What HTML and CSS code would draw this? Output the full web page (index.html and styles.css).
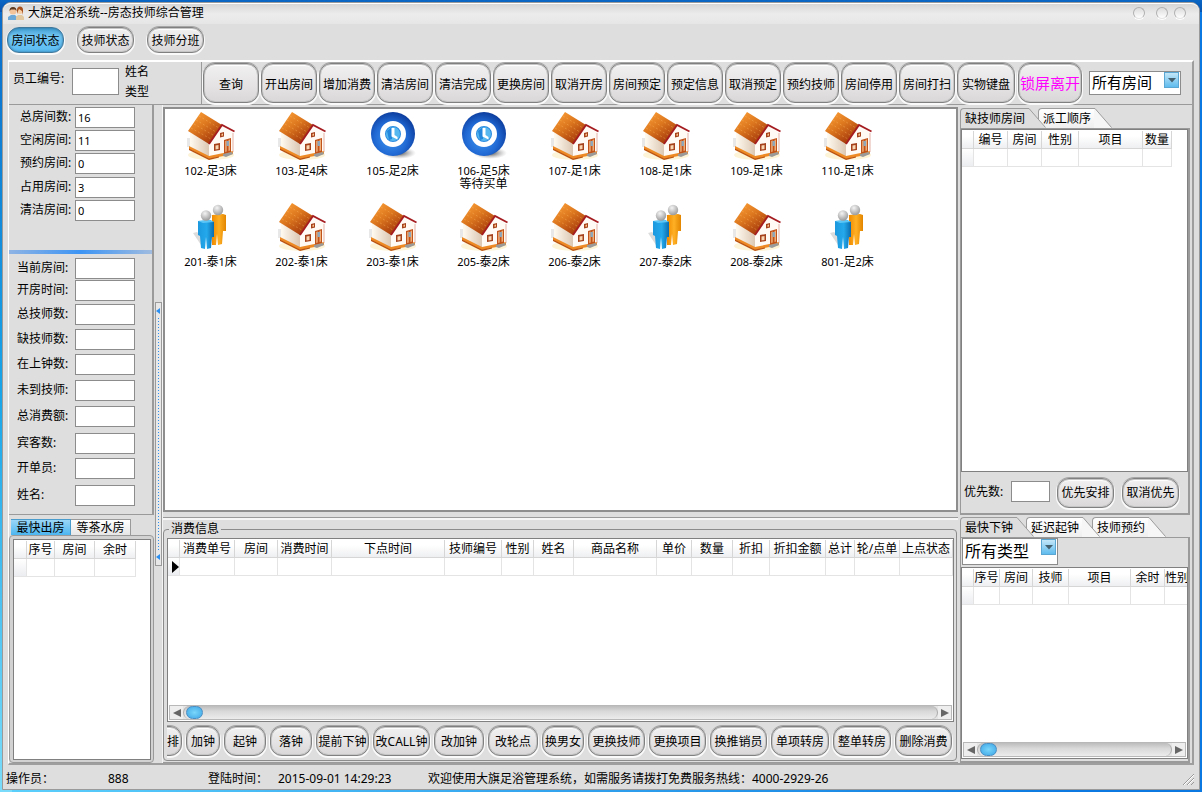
FILE: index.html
```html
<!DOCTYPE html>
<html lang="zh-CN">
<head>
<meta charset="utf-8">
<title>大旗足浴系统--房态技师综合管理</title>
<link rel="stylesheet" href="styles.css">
</head>
<body>
<svg class="defs" aria-hidden="true">
  <defs>
    <linearGradient id="roof" x1="0" y1="0" x2="0.7" y2="1"><stop offset="0" stop-color="#ffa53a"/><stop offset=".5" stop-color="#dc761e"/><stop offset="1" stop-color="#a0340a"/></linearGradient>
    <linearGradient id="wall" x1="0" y1="0" x2="1" y2="0"><stop offset="0" stop-color="#fffaf0"/><stop offset="1" stop-color="#dac5b0"/></linearGradient>
    <radialGradient id="ball" cx=".45" cy=".6" r=".62"><stop offset="0" stop-color="#3f97f2"/><stop offset=".6" stop-color="#2069d4"/><stop offset="1" stop-color="#0b3a9a"/></radialGradient>
    <radialGradient id="head" cx=".4" cy=".3" r=".7"><stop offset="0" stop-color="#f4f4f4"/><stop offset="1" stop-color="#9c9c9c"/></radialGradient>
    <linearGradient id="blue" x1="0" y1="0" x2="1" y2="0"><stop offset="0" stop-color="#1c98de"/><stop offset=".55" stop-color="#24a9ec"/><stop offset="1" stop-color="#0b6cae"/></linearGradient>
    <linearGradient id="orange" x1="0" y1="0" x2="1" y2="0"><stop offset="0" stop-color="#f08a00"/><stop offset=".5" stop-color="#ffb024"/><stop offset="1" stop-color="#e28500"/></linearGradient>
    <radialGradient id="shade"><stop offset="0" stop-color="#444"/><stop offset="1" stop-color="#999" stop-opacity="0"/></radialGradient>
    <symbol id="house" viewBox="0 0 48 48">
      <ellipse cx="24" cy="43" rx="23" ry="5" fill="#fdf3d6"/>
      <path d="M0 26h4v9H0z" fill="#e8e8e8"/>
      <path d="M3 20l20 11v15L3 36z" fill="url(#wall)"/>
      <path d="M22 31L35 14l11 6v21l-24 6z" fill="#fffaf3"/>
      <path d="M2 34l20 10 24-5v3l-24 5L2 37z" fill="#ee8a24"/>
      <path d="M2 36.500l20 10 10-2v1l-10 2.500L2 38z" fill="#b9510f"/>
      <path d="M14 0l21 13-13 19L1 19z" fill="url(#roof)"/>
      <path d="M12 4l20 12M9 8l20 12M7 12l19 11M4 16l20 11" stroke="#ffc26a" stroke-opacity=".45" stroke-width=".8" stroke-dasharray="2 2" fill="none"/>
      <path d="M22 32L35 13l12.500 6.500" fill="none" stroke="#a51c20" stroke-width="1.800"/>
      <path d="M46 21v19" stroke="#e0a090" stroke-width=".8"/>
      <path d="M33 21l4-1v4.500l-4 1z" fill="#a5421c"/><path d="M34.500 22l1.500-.5v2l-1.500.5z" fill="#ffc890"/>
      <path d="M27 32l6-1v7l-6 1z" fill="#a5421c"/><path d="M28.500 33.500l3-.5v4l-3 .5z" fill="#f9d5b0"/>
      <path d="M37 28l7-2v14l-7 2z" fill="#c0521b"/><path d="M38.200 29l1.500-.5v11l-1.500.5zM41.500 28l1.500-.5v11l-1.500.5z" fill="#f0b07a"/><path d="M39.500 29h2.500v5h-2.500z" fill="#8fa7b8"/>
      <path d="M36 42l9-2 1 2-7 3-3-1z" fill="#9a9a9a"/>
    </symbol>
    <symbol id="clock" viewBox="0 0 48 48">
      <ellipse cx="30" cy="41" rx="17" ry="6" fill="url(#shade)"/>
      <circle cx="24" cy="22" r="22" fill="url(#ball)"/>
      <circle cx="24" cy="22" r="10.500" fill="#2a8ae0" stroke="#fff" stroke-width="5"/>
      <circle cx="24" cy="22" r="7" fill="#57b8ef"/>
      <path d="M18 19l5-4v12l-3 1z" fill="#2287dd"/>
      <path d="M22.500 16h3v7l3 2v2.500l-6-3z" fill="#fff"/>
    </symbol>
    <symbol id="people" viewBox="0 0 48 48">
      <path d="M14 42L6 30l4-1 6 6z" fill="#dcdcdc"/>
      <path d="M25 12l11-1 3 1v16h-3l-1 13-4 1-1-11-1 11h-4z" fill="url(#orange)"/>
      <circle cx="31" cy="7" r="5.200" fill="url(#head)"/>
      <path d="M11 18l12-1 4 2v15h-2l-1 11-4 1-1-12-1 12-4-1-1-12-2-1z" fill="url(#blue)"/>
      <path d="M11 18l12-1 4 2-11 1z" fill="#5cc6f6"/>
      <circle cx="19" cy="12.500" r="5.200" fill="url(#head)"/>
    </symbol>
    <symbol id="slant" viewBox="0 0 18 20">
      <path class="slant-face" d="M0 .5h1L17 19v1H0z"/><path d="M0 .5h1L17.500 19.500" fill="none" stroke="#9c9c9c"/>
    </symbol>
  </defs>
</svg>

<div class="window">
  <header class="titlebar">
    <svg class="app-icon" viewBox="0 0 16 14"><path d="M0 14V11l3-2h4l2 2v3z" fill="#6da9d8"/><path d="M8 14v-3l2-2h4l2 2v3z" fill="#e3c9a0"/><circle cx="5" cy="5" r="3.500" fill="#f3c39a"/><path d="M1.500 5a3.500 4 0 0 1 7 0L7 3.500H3z" fill="#5a3a20"/><circle cx="12" cy="5" r="3" fill="#f6cfa5"/><path d="M9 8V4a3 3.500 0 0 1 6 0v5l-1-4-3-2-1 2z" fill="#a5501c"/></svg>
    <h1>大旗足浴系统--房态技师综合管理</h1>
    <div class="win-controls"><button class="dot dot-first" aria-label="最小化"></button><button class="dot" aria-label="最大化"></button><button class="dot" aria-label="关闭"></button></div>
  </header>

  <nav class="views">
    <button class="btn active">房间状态</button><button class="btn">技师状态</button><button class="btn">技师分班</button>
  </nav>

  <main class="frame">
    <div class="toolbar">
      <div class="employee">
        <label for="emp">员工编号:</label><input id="emp" type="text">
        <div class="employee-info"><span>姓名</span><span>类型</span></div>
      </div>
      <div class="actions">
        <button class="btn">查询</button><button class="btn">开出房间</button><button class="btn">增加消费</button><button class="btn">清洁房间</button><button class="btn">清洁完成</button><button class="btn">更换房间</button><button class="btn">取消开房</button><button class="btn">房间预定</button><button class="btn">预定信息</button><button class="btn">取消预定</button><button class="btn">预约技师</button><button class="btn">房间停用</button><button class="btn">房间打扫</button><button class="btn keyboard">实物键盘</button><button class="btn lock">锁屏离开</button>
      </div>
      <div class="combo room-filter">
        <select aria-label="房间筛选"><option>所有房间</option></select>
        <span class="combo-arrow"><svg viewBox="0 0 8 5"><path d="M0 0h8L4 4.500z"/></svg></span>
      </div>
    </div>

    <div class="body">
      <aside class="left">
        <section class="info">
          <div class="fields totals">
            <label for="f1">总房间数:</label><input id="f1" type="text" value="16">
            <label for="f2">空闲房间:</label><input id="f2" type="text" value="11">
            <label for="f3">预约房间:</label><input id="f3" type="text" value="0">
            <label for="f4">占用房间:</label><input id="f4" type="text" value="3">
            <label for="f5">清洁房间:</label><input id="f5" type="text" value="0">
          </div>
          <hr class="divider">
          <div class="fields details">
            <label for="d1">当前房间:</label><input id="d1" type="text">
            <label for="d2">开房时间:</label><input id="d2" type="text">
            <label for="d3">总技师数:</label><input id="d3" type="text">
            <label for="d4">缺技师数:</label><input id="d4" type="text">
            <label for="d5">在上钟数:</label><input id="d5" type="text">
            <label for="d6">未到技师:</label><input id="d6" type="text">
            <label for="d7">总消费额:</label><input id="d7" type="text">
            <label for="d8">宾客数:</label><input id="d8" type="text">
            <label for="d9">开单员:</label><input id="d9" type="text">
            <label for="d10">姓名:</label><input id="d10" type="text">
          </div>
        </section>
        <section class="fastest">
          <div class="flat-tabs"><button class="flat-tab current">最快出房</button><button class="flat-tab">等茶水房</button></div>
          <div class="round-frame">
            <div class="sheet">
              <table class="grid out-grid">
                <colgroup><col><col><col><col></colgroup>
                <thead><tr><th></th><th>序号</th><th>房间</th><th>余时</th></tr></thead>
                <tbody><tr><td></td><td></td><td></td><td></td></tr></tbody>
              </table>
            </div>
          </div>
        </section>
      </aside>

      <div class="splitter">
        <button class="grip" aria-label="折叠"><svg viewBox="0 0 4 6"><path d="M4 0v6L0 3z"/></svg><span class="dots"></span><svg viewBox="0 0 4 6"><path d="M4 0v6L0 3z"/></svg></button>
      </div>

      <div class="center">
        <ul class="rooms">
          <li><svg><use href="#house"/></svg><p><span class="num">102-</span>足<span class="num">3</span>床</p></li>
          <li><svg><use href="#house"/></svg><p><span class="num">103-</span>足<span class="num">4</span>床</p></li>
          <li><svg><use href="#clock"/></svg><p><span class="num">105-</span>足<span class="num">2</span>床</p></li>
          <li><svg><use href="#clock"/></svg><p><span class="num">106-</span>足<span class="num">5</span>床<br>等待买单</p></li>
          <li><svg><use href="#house"/></svg><p><span class="num">107-</span>足<span class="num">1</span>床</p></li>
          <li><svg><use href="#house"/></svg><p><span class="num">108-</span>足<span class="num">1</span>床</p></li>
          <li><svg><use href="#house"/></svg><p><span class="num">109-</span>足<span class="num">1</span>床</p></li>
          <li><svg><use href="#house"/></svg><p><span class="num">110-</span>足<span class="num">1</span>床</p></li>
          <li><svg><use href="#people"/></svg><p><span class="num">201-</span>泰<span class="num">1</span>床</p></li>
          <li><svg><use href="#house"/></svg><p><span class="num">202-</span>泰<span class="num">1</span>床</p></li>
          <li><svg><use href="#house"/></svg><p><span class="num">203-</span>泰<span class="num">1</span>床</p></li>
          <li><svg><use href="#house"/></svg><p><span class="num">205-</span>泰<span class="num">2</span>床</p></li>
          <li><svg><use href="#house"/></svg><p><span class="num">206-</span>泰<span class="num">2</span>床</p></li>
          <li><svg><use href="#people"/></svg><p><span class="num">207-</span>泰<span class="num">2</span>床</p></li>
          <li><svg><use href="#house"/></svg><p><span class="num">208-</span>泰<span class="num">2</span>床</p></li>
          <li><svg><use href="#people"/></svg><p><span class="num">801-</span>足<span class="num">2</span>床</p></li>
        </ul>

        <section class="bills">
          <fieldset>
            <legend>消费信息</legend>
            <div class="sheet">
              <table class="grid bill-grid">
                <colgroup><col><col><col><col><col><col><col><col><col><col><col><col><col><col><col><col></colgroup>
                <thead><tr><th></th><th>消费单号</th><th>房间</th><th>消费时间</th><th>下点时间</th><th>技师编号</th><th>性别</th><th>姓名</th><th>商品名称</th><th>单价</th><th>数量</th><th>折扣</th><th>折扣金额</th><th>总计</th><th>轮/点单</th><th>上点状态</th></tr></thead>
                <tbody><tr><td><svg class="row-mark" viewBox="0 0 7 12"><path d="M0 0l7 6-7 6z"/></svg></td><td></td><td></td><td></td><td></td><td></td><td></td><td></td><td></td><td></td><td></td><td></td><td></td><td></td><td></td><td></td></tr></tbody>
              </table>
              <div class="scroll"><button class="arrow" aria-label="左移"><svg viewBox="0 0 8 8"><path d="M8 0v8L0 4z"/></svg></button><div class="track"><span class="thumb"></span></div><button class="arrow" aria-label="右移"><svg viewBox="0 0 8 8"><path d="M0 0v8l8-4z"/></svg></button></div>
            </div>
            <div class="bill-actions">
              <button class="btn w-s clipped">排</button><button class="btn w-s">加钟</button><button class="btn w-m">起钟</button><button class="btn w-m">落钟</button><button class="btn w-n">提前下钟</button><button class="btn">改CALL钟</button><button class="btn w-l">改加钟</button><button class="btn w-l">改轮点</button><button class="btn w-m">换男女</button><button class="btn">更换技师</button><button class="btn">更换项目</button><button class="btn">换推销员</button><button class="btn w-x">单项转房</button><button class="btn w-x">整单转房</button><button class="btn">删除消费</button>
            </div>
          </fieldset>
        </section>
      </div>

      <aside class="right">
        <section class="notebook">
          <div class="tabs">
            <button class="tab current"><span>缺技师房间</span><svg><use href="#slant"/></svg></button><button class="tab"><span>派工顺序</span><svg><use href="#slant"/></svg></button>
          </div>
          <div class="page">
            <div class="sheet">
              <table class="grid short-grid">
                <colgroup><col><col><col><col><col><col></colgroup>
                <thead><tr><th></th><th>编号</th><th>房间</th><th>性别</th><th>项目</th><th>数量</th></tr></thead>
                <tbody><tr><td></td><td></td><td></td><td></td><td></td><td></td></tr></tbody>
              </table>
            </div>
            <div class="priority">
              <label for="pri">优先数:</label><input id="pri" type="text">
              <button class="btn">优先安排</button><button class="btn">取消优先</button>
            </div>
          </div>
        </section>
        <section class="notebook">
          <div class="tabs">
            <button class="tab current"><span>最快下钟</span><svg><use href="#slant"/></svg></button><button class="tab"><span>延迟起钟</span><svg><use href="#slant"/></svg></button><button class="tab"><span>技师预约</span><svg><use href="#slant"/></svg></button>
          </div>
          <div class="page page-soon">
            <div class="combo type-filter">
              <select aria-label="类型筛选"><option>所有类型</option></select>
              <span class="combo-arrow"><svg viewBox="0 0 8 5"><path d="M0 0h8L4 4.500z"/></svg></span>
            </div>
            <div class="sheet">
              <table class="grid soon-grid">
                <colgroup><col><col><col><col><col><col><col></colgroup>
                <thead><tr><th></th><th>序号</th><th>房间</th><th>技师</th><th>项目</th><th>余时</th><th>性别</th></tr></thead>
                <tbody><tr><td></td><td></td><td></td><td></td><td></td><td></td><td></td></tr></tbody>
              </table>
              <div class="scroll"><button class="arrow" aria-label="左移"><svg viewBox="0 0 8 8"><path d="M8 0v8L0 4z"/></svg></button><div class="track"><span class="thumb"></span></div><button class="arrow" aria-label="右移"><svg viewBox="0 0 8 8"><path d="M0 0v8l8-4z"/></svg></button></div>
            </div>
          </div>
        </section>
      </aside>
    </div>
  </main>

  <footer class="status">
    <span class="s-op">操作员：</span><span class="s-id">888</span><span class="s-login">登陆时间：</span><span class="s-time">2015-09-01 14:29:23</span><span class="s-msg">欢迎使用大旗足浴管理系统，如需服务请拨打免费服务热线：4000-2929-26</span>
    <svg class="resize" viewBox="0 0 12 12"><path d="M1 12L12 1M5 12l7-7M9 12l3-3" stroke="#999" fill="none"/><path d="M2 12L12 2M6 12l6-6" stroke="#fff" fill="none"/></svg>
  </footer>
</div>
</body>
</html>
```
FILE: styles.css
```css
* { box-sizing: border-box; margin: 0; padding: 0; }

html, body { height: 100%; }

body {
  display: flex;
  padding: 2px;
  overflow: hidden;
  font: 12px/16px "Noto Sans", "Noto Sans CJK SC", sans-serif;
  color: #000;
  background:
    linear-gradient(#0a66c4, #0653b0) top / 100% 12px no-repeat,
    linear-gradient(#0a6ac8, #1aa5e8 50%, #7adcfa) left / 12px 100% no-repeat,
    linear-gradient(to right, #5cd0fc, #0a78e0 90%);
}

button, input, select { font: inherit; color: inherit; border-radius: 0; }
button { border: 0; background: none; white-space: nowrap; }
.defs { position: absolute; width: 0; height: 0; }

.window {
  flex: 1;
  min-width: 0;
  display: flex;
  flex-direction: column;
  border: 1px solid #9a9a9a;
  border-radius: 9px 9px 0 0;
  background: #dedede;
}

/* Title bar */
.titlebar {
  display: flex;
  align-items: center;
  height: 21px;
  padding: 0 13px 2px 5px;
  gap: 4px;
  border-top: 1px solid #fff;
  border-radius: 8px 8px 0 0;
  background: linear-gradient(#d6d6d6, #ececec 50%, #e6e6e6);
}
.titlebar h1 { flex: 1; font-size: 12px; font-weight: normal; }
.app-icon { width: 16px; height: 14px; }
.win-controls { display: flex; gap: 6px; }
.dot {
  width: 12px;
  height: 12px;
  border: 1px solid #b0b0b0;
  border-bottom-color: #e6e6e6;
  border-radius: 50%;
  background: linear-gradient(#dcdcdc, #fff);
  box-shadow: 0 1px 0 #fff;
}
.dot-first { margin-right: 5px; }

/* Push buttons */
.btn {
  flex: none;
  width: 57px;
  height: 30px;
  overflow: hidden;
  text-align: center;
  border: 1px solid #808080;
  border-radius: 12px;
  background: linear-gradient(#f2f1f1, #e4e2e2 60%, #d9d7d7);
  box-shadow: inset 0 0 0 1px #c6c6c6, inset 0 2px 1px #fff, 0 -1px 0 #a6a6a6, 0 1px 0 1px #fafafa;
}
.views { display: flex; gap: 13px; height: 36px; padding: 3px 4px; }
.views .btn { height: 26px; padding-top: 1px; }
.btn.active {
  border-color: #40789c;
  background: linear-gradient(#3f9cd0, #74c8f4 35%, #5bbcf2);
  box-shadow: inset 0 0 3px #2a6c98, 0 1px 0 1px #fafafa;
}

/* Main frame */
.frame {
  flex: 1;
  min-height: 0;
  display: flex;
  flex-direction: column;
  margin: 0 5px;
  border: solid #9e9e9e;
  border-width: 2px 2px 2px 1px;
  border-top-color: #fff;
  border-left-color: #fff;
}
.toolbar {
  display: flex;
  align-items: center;
  height: 43px;
  border-bottom: 1px solid #9a9a9a;
}
.employee {
  align-self: stretch;
  display: flex;
  align-items: center;
  width: 193px;
  padding: 0 4px;
  border-right: 1px solid #9a9a9a;
}
.employee label { width: 59px; padding-bottom: 8px; white-space: nowrap; }
.employee input { width: 47px; height: 27px; margin-bottom: 4px; }
.employee-info { display: flex; flex-direction: column; gap: 4px; padding: 0 0 2px 6px; }
input[type="text"] { border: 1px solid #8c8c8c; background: #fff; padding: 0 2px; outline: 0; min-width: 0; }

.actions { display: flex; gap: 2px; padding-left: 1px; }
.actions .btn { width: 56px; height: 40px; padding-top: 3px; }
.actions .keyboard { width: 58px; }
.actions .lock { width: 64px; margin-left: 1px; padding-top: 0; color: #f0f; font-size: 15px; }

.combo { position: relative; display: flex; }
.combo select {
  width: 100%;
  height: 100%;
  padding: 0 2px 2px;
  appearance: none;
  border: 1px solid #8c8c8c;
  background: #fff;
  outline: 0;
}
.combo-arrow {
  position: absolute;
  top: 1px;
  right: 2px;
  display: grid;
  place-items: center;
  width: 15px;
  height: 16px;
  border: 1px solid #5ba7d4;
  background: linear-gradient(#c4e6f8, #5fbcee);
  pointer-events: none;
}
.combo-arrow svg { width: 8px; height: 5px; fill: #44606f; }
.room-filter { width: 92px; height: 24px; margin-left: 7px; font-size: 15px; }
.type-filter { width: 96px; height: 27px; margin-left: 1px; font-size: 16px; }

/* Body columns */
.body {
  flex: 1;
  min-height: 0;
  display: grid;
  grid-template-columns: 145px 9px minmax(0, 1fr) 234px;
}

.left { display: flex; flex-direction: column; min-height: 0; }
.info {
  padding: 2px 0 8px;
  border: solid #9a9a9a;
  border-width: 0 2px 1px 0;
}
.fields { display: grid; grid-template-columns: 57px 60px; column-gap: 1px; padding-left: 8px; }
.fields label { line-height: 20px; text-align: left; white-space: nowrap; }
.fields input { height: 21px; font-size: 11px; }
.totals { grid-template-rows: 23px 23px 24px 23px 21px; }
.totals label { padding-left: 3px; }
.divider { height: 4px; margin: 29px 0 4px; border: 0; background: linear-gradient(to right, #8fb4e4, #3c94f4 50%, #a0bce0); }
.details { grid-template-rows: 22px 24px 25px 25px 26px 26px 27px 25px 27px 21px; }

.fastest { flex: 1; min-height: 0; display: flex; flex-direction: column; padding-top: 4px; }
.flat-tabs { display: flex; padding-left: 2px; }
.flat-tab { width: 60px; height: 16px; line-height: 15px; border: 1px solid #9a9a9a; border-width: 1px 1px 0 0; background: linear-gradient(#fff, #e6e6e6); }
.flat-tab.current { border-color: #4a9ccc; background: linear-gradient(#9ad6f6, #4db6f0); }
.round-frame {
  flex: 1;
  min-height: 0;
  display: flex;
  padding: 3px 2px 2px 3px;
  border: 1px solid #9a9a9a;
  border-radius: 4px;
  background: #d2d2d2;
}

/* Data sheets */
.sheet {
  flex: 1;
  min-width: 0;
  min-height: 0;
  display: flex;
  flex-direction: column;
  justify-content: space-between;
  overflow: hidden;
  border: 1px solid #808080;
  background: #fff;
}
.grid { border-collapse: separate; border-spacing: 0; table-layout: fixed; width: 0; margin-top: 1px; }
.grid th, .grid td { height: 18px; border: solid #e4e4e4; border-width: 0 1px 1px 0; text-align: center; white-space: nowrap; overflow: hidden; }
.grid th { font-weight: normal; line-height: 17px; background: linear-gradient(#fff 30%, #eeeff1); border-color: #d6d6d6; }
.grid td:first-child { background: linear-gradient(#fff, #ecedf0); }

.out-grid col:nth-child(1) { width: 13px; }
.out-grid col:nth-child(2) { width: 28px; }
.out-grid col:nth-child(3) { width: 40px; }
.out-grid col:nth-child(4) { width: 41px; }

.bill-grid { width: 100%; }
.bill-grid col:nth-child(1) { width: 12px; }
.bill-grid col:nth-child(2) { width: 55px; }
.bill-grid col:nth-child(3) { width: 43px; }
.bill-grid col:nth-child(4) { width: 54px; }
.bill-grid col:nth-child(6) { width: 57px; }
.bill-grid col:nth-child(7) { width: 32px; }
.bill-grid col:nth-child(8) { width: 40px; }
.bill-grid col:nth-child(9) { width: 83px; }
.bill-grid col:nth-child(10) { width: 35px; }
.bill-grid col:nth-child(11) { width: 41px; }
.bill-grid col:nth-child(12) { width: 37px; }
.bill-grid col:nth-child(13) { width: 56px; }
.bill-grid col:nth-child(14) { width: 29px; }
.bill-grid col:nth-child(15) { width: 45px; }
.bill-grid col:nth-child(16) { width: 53px; }
.row-mark { display: block; width: 7px; height: 12px; margin-left: 4px; }

.short-grid col:nth-child(1) { width: 12px; }
.short-grid col:nth-child(2) { width: 34px; }
.short-grid col:nth-child(3) { width: 34px; }
.short-grid col:nth-child(4) { width: 37px; }
.short-grid col:nth-child(5) { width: 64px; }
.short-grid col:nth-child(6) { width: 29px; }

.soon-grid col:nth-child(1) { width: 12px; }
.soon-grid col:nth-child(2) { width: 26px; }
.soon-grid col:nth-child(3) { width: 33px; }
.soon-grid col:nth-child(4) { width: 36px; }
.soon-grid col:nth-child(5) { width: 62px; }
.soon-grid col:nth-child(6) { width: 34px; }
.soon-grid col:nth-child(7) { width: 24px; }

/* Splitter */
.splitter { display: flex; align-items: center; justify-content: center; border-right: 1px solid #f4f4f4; }
.grip {
  display: flex;
  flex-direction: column;
  align-items: center;
  gap: 4px;
  width: 7px;
  height: 40%;
  padding: 5px 0;
  border: 1px solid #9a9a9a;
  background: #e8e8e8;
}
.grip svg { flex: none; width: 4px; height: 6px; fill: #2a8ef0; }
.dots { flex: 1; width: 1px; background: repeating-linear-gradient(#2a8ef0 0 1px, #e8e8e8 1px 3px); }

/* Room list */
.center { display: grid; grid-template-rows: minmax(0, 1fr) 246px; gap: 5px; padding-top: 2px; min-height: 0; }
.rooms {
  display: grid;
  grid-template-columns: repeat(auto-fill, 91px);
  grid-auto-rows: 91px;
  padding: 3px 0;
  list-style: none;
  border: 2px solid #8e8e8e;
  background: #fff;
}
.rooms li { display: flex; flex-direction: column; align-items: center; }
.rooms svg { flex: none; width: 48px; height: 48px; }
.rooms p { margin-top: 4px; line-height: 13px; text-align: center; }
.num { font-size: 11px; }

/* Consumption panel */
.bills { display: flex; padding: 3px 1px 1px 0; border: solid #9a9a9a; border-width: 1px 0; box-shadow: inset 0 2px 0 #f6f6f6; min-width: 0; }
.bills fieldset {
  flex: 1;
  min-width: 0;
  display: flex;
  flex-direction: column;
  padding: 1px 2px 2px 3px;
  border: 1px solid #8c8c8c;
  border-radius: 4px;
}
.bills legend { height: 16px; padding: 0 2px; margin-left: 2px; }
.bill-actions { display: flex; justify-content: flex-end; gap: 4px; padding: 4px 2px 2px 0; overflow: hidden; }
.bill-actions .btn { padding-top: 1px; }
.w-s { width: 34px; }
.w-m { width: 42px; }
.w-l { width: 50px; }
.w-n { width: 53px; }
.w-x { width: 58px; }
.bill-actions .clipped { padding-right: 2px; text-align: right; }

.scroll { display: flex; height: 15px; margin: 0 1px 1px; border: 1px solid #b8b8b8; background: #e4e4e4; }
.arrow { display: grid; place-items: center; width: 13px; background: #eee; }
.arrow svg { width: 8px; height: 8px; fill: #666; }
.track { flex: 1; display: flex; align-items: center; padding-left: 2px; border-radius: 8px; border: solid #aaa; border-width: 0 1px; background: linear-gradient(#bcbcbc, #d8d8d8 40%, #ececec); }
.thumb { width: 17px; height: 13px; border: 1px solid #4a8fc4; border-radius: 7px; background: radial-gradient(#7ad6fa, #3ea6e6); }

/* Right column */
.right {
  display: grid;
  grid-template-columns: minmax(0, 1fr);
  grid-template-rows: minmax(0, 1fr) 246px;
  gap: 2px;
  min-height: 0;
  padding: 3px 2px 0;
}
.notebook { display: flex; flex-direction: column; min-height: 0; }
.tabs { display: flex; height: 20px; }
.tab { display: flex; flex: none; margin-right: -8px; }
.tab span { height: 20px; padding: 1px 3px 0 4px; line-height: 18px; border: solid #9c9c9c; border-width: 1px 0 0 1px; border-radius: 4px 0 0 0; background: linear-gradient(#fff, #efefef); }
.tab svg { width: 18px; height: 20px; color: #f6f6f6; }
.slant-face { fill: currentColor; }
.tab.current { z-index: 2; }
.tab.current span { background: #dedede; }
.tab.current svg { color: #dedede; }
.tab:nth-child(2) { z-index: 1; }
.page {
  flex: 1;
  min-height: 0;
  display: flex;
  flex-direction: column;
  gap: 2px;
  border: solid #9a9a9a;
  border-width: 1px 2px 2px 1px;
}
.page-soon { padding-bottom: 2px; }
.priority { display: flex; align-items: center; height: 39px; padding: 0 0 2px 3px; }
.priority label { width: 47px; padding-bottom: 2px; }
.priority input { width: 39px; height: 21px; margin: 0 7px 2px 0; }
.priority .btn + .btn { margin-left: 8px; }

/* Status bar */
.status { display: flex; align-items: center; height: 24px; padding: 3px 5px 0 3px; white-space: nowrap; }
.s-op { width: 102px; }
.s-id { width: 100px; }
.s-login { width: 70px; }
.s-time { width: 150px; }
.s-msg { flex: 1; }
.resize { width: 12px; height: 12px; }
```
